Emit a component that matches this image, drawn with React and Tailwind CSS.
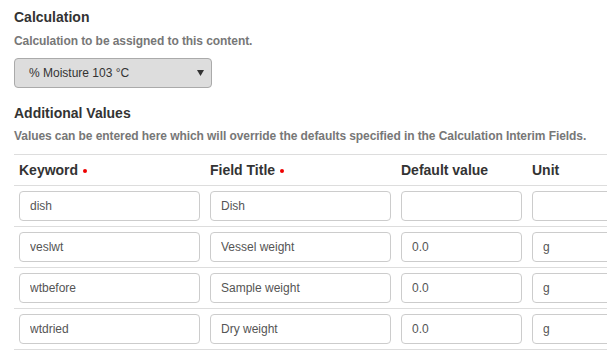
const rows = [
  { keyword: 'dish', title: 'Dish', value: '', unit: '' },
  { keyword: 'veslwt', title: 'Vessel weight', value: '0.0', unit: 'g' },
  { keyword: 'wtbefore', title: 'Sample weight', value: '0.0', unit: 'g' },
  { keyword: 'wtdried', title: 'Dry weight', value: '0.0', unit: 'g' },
]

function Field({ value, className }) {
  return (
    <input
      type="text"
      readOnly
      value={value}
      className={`h-[30px] rounded-[4px] border border-[#ccc] bg-white pl-[10px] text-[12px] text-[#555] outline-none ${className}`}
    />
  )
}

function Required() {
  return <span className="ml-[5px] inline-block h-[4px] w-[4px] rounded-full bg-[#e00] align-middle" />
}

export default function App() {
  return (
    <div className="w-[607px] h-[355px] overflow-hidden bg-white pl-[14px] font-['Liberation_Sans',Arial,sans-serif] text-[#333]">
      <h3 className="mt-[9px] text-[14px] font-bold leading-[16px]">Calculation</h3>
      <p className="mt-[8px] text-[12px] font-bold leading-[16px] tracking-[-0.07px] text-[#777]">
        Calculation to be assigned to this content.
      </p>
      <div className="mt-[9px] flex h-[30px] w-[198px] items-center justify-between rounded-[4px] border border-[#aaa] bg-[#ddd] pl-[14px] pr-[7px] text-[12px] text-[#333]">
        <span>% Moisture 103 °C</span>
        <svg width="7" height="6" viewBox="0 0 7 6">
          <path d="M0 0 H7 L3.5 6 Z" fill="#333" />
        </svg>
      </div>

      <h3 className="mt-[17px] text-[14px] font-bold leading-[16px]">Additional Values</h3>
      <p className="mt-[7px] text-[12px] font-bold leading-[16px] tracking-[-0.07px] text-[#777]">
        Values can be entered here which will override the defaults specified in the Calculation Interim Fields.
      </p>

      <div className="mt-[10px] w-[640px] border-t border-[#ddd]">
        <div className="grid grid-cols-[191px_191px_131px_127px] border-b border-[#ddd] text-[14px] font-bold leading-[20px]">
          <div className="px-[5px] py-[5px]">Keyword<Required /></div>
          <div className="px-[5px] py-[5px]">Field Title<Required /></div>
          <div className="px-[5px] py-[5px]">Default value</div>
          <div className="px-[5px] py-[5px]">Unit</div>
        </div>
        {rows.map((r) => (
          <div key={r.keyword} className="grid grid-cols-[191px_191px_131px_127px] border-b border-[#ddd]">
            <div className="p-[5px]"><Field value={r.keyword} className="w-[181px]" /></div>
            <div className="p-[5px]"><Field value={r.title} className="w-[181px]" /></div>
            <div className="p-[5px]"><Field value={r.value} className="w-[121px]" /></div>
            <div className="p-[5px]"><Field value={r.unit} className="w-[117px]" /></div>
          </div>
        ))}
      </div>
    </div>
  )
}
